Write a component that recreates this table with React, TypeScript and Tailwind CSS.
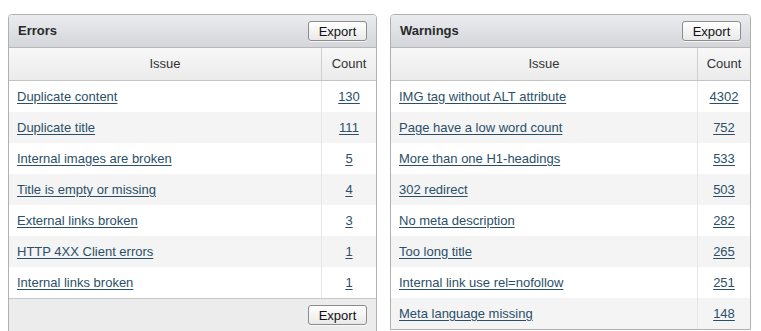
const errors = [
  ["Duplicate content", 130],
  ["Duplicate title", 111],
  ["Internal images are broken", 5],
  ["Title is empty or missing", 4],
  ["External links broken", 3],
  ["HTTP 4XX Client errors", 1],
  ["Internal links broken", 1],
] as const;

const warnings = [
  ["IMG tag without ALT attribute", 4302],
  ["Page have a low word count", 752],
  ["More than one H1-headings", 533],
  ["302 redirect", 503],
  ["No meta description", 282],
  ["Too long title", 265],
  ["Internal link use rel=nofollow", 251],
  ["Meta language missing", 148],
] as const;

function ExportButton() {
  return (
    <button className="h-[20px] w-[59px] rounded-[3px] border border-[#8c8c8c] bg-gradient-to-b from-white to-[#e9e9e9] text-[13px] leading-none text-[#111] shadow-[0_1px_0_rgba(255,255,255,0.7)]">
      Export
    </button>
  );
}

function Panel({
  title,
  rows,
  width,
  countWidth,
  footer,
}: {
  title: string;
  rows: readonly (readonly [string, number])[];
  width: string;
  countWidth: string;
  footer?: boolean;
}) {
  return (
    <section className={`${width} shrink-0 overflow-hidden rounded-t-[4px] border border-[#b0b0b0] bg-white`}>
      {/* panel header */}
      <div className="flex h-[33px] items-center justify-between border-b border-[#b8b8b8] bg-gradient-to-b from-[#ebecef] to-[#d4d6db] pl-[9px] pr-[9px]">
        <h2 className="text-[13px] font-bold text-[#2a2a2a]">{title}</h2>
        <ExportButton />
      </div>

      {/* column header */}
      <div className="flex h-[33px] border-b border-[#c4c4c4] bg-gradient-to-b from-[#f8f8f8] to-[#ebebeb] text-[13px] text-[#333]">
        <div className="flex flex-1 items-center justify-center">Issue</div>
        <div className={`${countWidth} flex items-center justify-center border-l border-[#cfcfcf]`}>Count</div>
      </div>

      {/* rows */}
      {rows.map(([name, count], i) => (
        <div
          key={name}
          className={`flex h-[31px] text-[13px] ${i % 2 === 1 ? "bg-[#f4f4f4]" : "bg-white"}`}
        >
          <div className="flex flex-1 items-center pl-[8px]">
            <a href="#" className="text-[#2b4f69] underline underline-offset-2">
              {name}
            </a>
          </div>
          <div className={`${countWidth} flex items-center justify-center border-l border-[#e6e6e6]`}>
            <a href="#" className="text-[#2b4f69] underline underline-offset-2">
              {count}
            </a>
          </div>
        </div>
      ))}

      {footer && (
        <div className="flex h-[34px] items-start justify-end border-t border-[#c8c8c8] bg-[#ececec] pr-[9px] pt-[6px]">
          <ExportButton />
        </div>
      )}
    </section>
  );
}

export default function App() {
  return (
    <main className="h-[331px] overflow-hidden bg-white font-['Liberation_Sans',Arial,sans-serif]">
      <div className="flex items-start gap-[13px] pl-[8px] pt-[14px]">
        <Panel title="Errors" rows={errors} width="w-[369px]" countWidth="w-[55px]" footer />
        <Panel title="Warnings" rows={warnings} width="w-[361px]" countWidth="w-[53px]" />
      </div>
    </main>
  );
}
